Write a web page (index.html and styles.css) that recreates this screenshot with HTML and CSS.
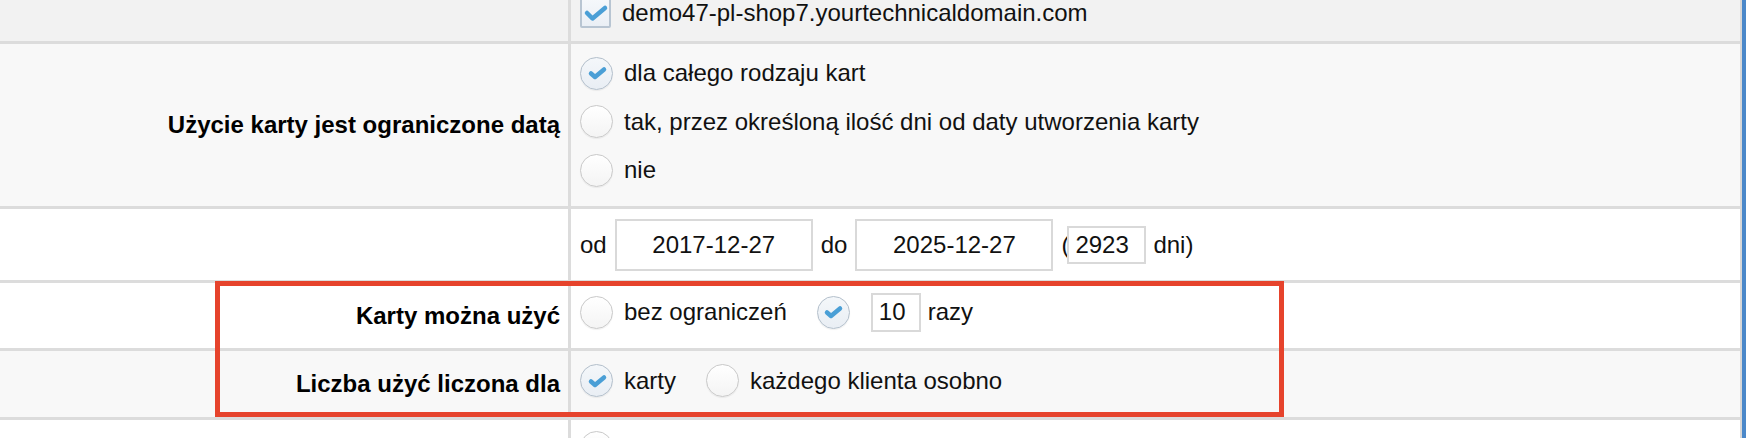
FILE: index.html
```html
<!DOCTYPE html>
<html lang="pl">
<head>
<meta charset="utf-8">
<title>Karta</title>
<link rel="stylesheet" href="styles.css">
</head>
<body>
<div class="page">
  <div class="form">
    <div class="row row-domain shade-dark">
      <div class="label"></div>
      <div class="value value-domain">
        <span class="checkbox">
          <svg viewBox="0 0 31 31" width="31" height="31"><path d="M7 16 L12.5 21.5 L25 11" class="tick"/></svg>
        </span>
        <span class="opt-text">demo47-pl-shop7.yourtechnicaldomain.com</span>
      </div>
    </div>

    <div class="row row-date shade">
      <div class="label">Użycie karty jest ograniczone datą</div>
      <div class="value value-list">
        <label class="opt opt-line">
          <span class="radio checked"><svg viewBox="0 0 33 33" width="33" height="33"><path d="M11 17.5 L15 21 L24 13.5" class="tick"/></svg></span>
          <span>dla całego rodzaju kart</span>
        </label>
        <label class="opt opt-line">
          <span class="radio"></span>
          <span>tak, przez określoną ilość dni od daty utworzenia karty</span>
        </label>
        <label class="opt opt-line">
          <span class="radio"></span>
          <span>nie</span>
        </label>
      </div>
    </div>

    <div class="row row-range">
      <div class="label"></div>
      <div class="value value-range">
        <span>od</span>
        <input class="date" type="text" value="2017-12-27" readonly>
        <span>do</span>
        <input class="date" type="text" value="2025-12-27" readonly>
        <span class="days">
          <span>(</span><input class="num days-num" type="text" value="2923" readonly><span class="days-unit">dni)</span>
        </span>
      </div>
    </div>

    <div class="row row-uses">
      <div class="label">Karty można użyć</div>
      <div class="value value-low choices">
        <label class="opt">
          <span class="radio"></span>
          <span>bez ograniczeń</span>
        </label>
        <label class="opt">
          <span class="radio checked"><svg viewBox="0 0 33 33" width="33" height="33"><path d="M11 17.5 L15 21 L24 13.5" class="tick"/></svg></span>
          <input class="num times-num" type="text" value="10" readonly>
          <span>razy</span>
        </label>
      </div>
    </div>

    <div class="row row-count shade">
      <div class="label">Liczba użyć liczona dla</div>
      <div class="value value-low choices">
        <label class="opt">
          <span class="radio checked"><svg viewBox="0 0 33 33" width="33" height="33"><path d="M11 17.5 L15 21 L24 13.5" class="tick"/></svg></span>
          <span>karty</span>
        </label>
        <label class="opt">
          <span class="radio"></span>
          <span>każdego klienta osobno</span>
        </label>
      </div>
    </div>

    <div class="row row-last">
      <div class="label"></div>
      <div class="value value-top">
        <label class="opt">
          <span class="radio"></span>
        </label>
      </div>
    </div>
  </div>
  <div class="edge"></div>

  <div class="annotation"></div>
</div>
</body>
</html>
```

FILE: styles.css
```css
html, body {
  margin: 0;
  padding: 0;
  height: 438px;
  overflow: hidden;
  background: #ffffff;
}

body {
  font-family: "Liberation Sans", Arial, Helvetica, sans-serif;
  font-size: 24px;
  line-height: 28px;
  color: #111111;
}

.page {
  position: relative;
  display: flex;
  width: 1752px;
  height: 438px;
  overflow: hidden;
}

.form {
  flex: none;
  width: 1742px;
  border-right: 2px solid #d8d8d8;
  box-sizing: border-box;
}

.edge {
  flex: none;
  width: 4px;
  background: #4b88c9;
}

.row {
  display: grid;
  grid-template-columns: 571px 1fr;
  border-bottom: 3px solid #dcdcdc;
  background: #ffffff;
}

.shade { background: #f8f8f8; }
.shade-dark { background: #f2f2f2; }

.row-domain { height: 51px; margin-top: -10px; }
.row-date { height: 162px; }
.row-range { height: 71px; }
.row-uses { height: 65px; }
.row-count { height: 66px; }
.row-last {
  height: 18px;
  border-bottom: none;
  overflow: hidden;
}

.label {
  display: flex;
  align-items: center;
  justify-content: flex-end;
  padding-right: 8px;
  border-right: 3px solid #dcdcdc;
  box-sizing: border-box;
  font-weight: bold;
  color: #000000;
  white-space: nowrap;
}

.value {
  display: flex;
  align-items: center;
  padding-left: 9px;
  box-sizing: border-box;
  white-space: nowrap;
}

.value-low { padding-bottom: 7px; }

.value-domain {
  padding-bottom: 6px;
  line-height: 24px;
}

.value-list {
  flex-direction: column;
  align-items: flex-start;
  padding-top: 5px;
}

.value-top {
  align-items: flex-start;
  padding-top: 11px;
}

.choices { gap: 30px; }

.opt {
  display: flex;
  align-items: center;
}

.opt-line { height: 48.5px; }

.opt-text { margin-left: 11px; }

.radio {
  flex: none;
  display: block;
  width: 33px;
  height: 33px;
  margin-right: 11px;
  border: 1.5px solid #c9c9c9;
  border-radius: 50%;
  box-sizing: border-box;
  background: linear-gradient(#ffffff, #f4f4f4);
  box-shadow: 0 1px 1px rgba(0, 0, 0, 0.06);
  position: relative;
}

.radio.checked {
  border-color: #b3bfcb;
  background: linear-gradient(#f4f7fa, #e9eef4);
}

.radio svg {
  position: absolute;
  left: -1.5px;
  top: -1.5px;
}

.checkbox {
  flex: none;
  display: block;
  width: 31px;
  height: 31px;
  border: 2px solid #b8c5d2;
  border-radius: 2px;
  box-sizing: border-box;
  background: linear-gradient(#f5f8fb, #eaeff5);
  position: relative;
}

.checkbox svg {
  position: absolute;
  left: -2px;
  top: -2px;
}

.tick {
  fill: none;
  stroke: #4a9fd6;
  stroke-width: 4.5;
  stroke-linecap: round;
  stroke-linejoin: round;
}

.value-range { gap: 8px; }

input {
  font-family: "Liberation Sans", Arial, Helvetica, sans-serif;
  font-size: 24px;
  color: #111111;
  border: 2px solid #d9d9d9;
  background: #ffffff;
  box-sizing: border-box;
  margin: 0;
  outline: none;
}

.date {
  width: 198px;
  height: 52px;
  text-align: center;
  padding: 0;
}

.num {
  padding: 0 0 0 6px;
}

.days {
  display: flex;
  align-items: center;
}

.days-num {
  width: 79px;
  height: 38px;
  margin-left: -2px;
}

.days-unit { margin-left: 7px; }

.times-num {
  width: 50px;
  height: 39px;
  margin-left: 10px;
  margin-right: 7px;
}

.annotation {
  position: absolute;
  left: 215px;
  top: 281px;
  width: 1069px;
  height: 136px;
  border: 5px solid #e6432c;
  box-sizing: border-box;
  pointer-events: none;
}
```
